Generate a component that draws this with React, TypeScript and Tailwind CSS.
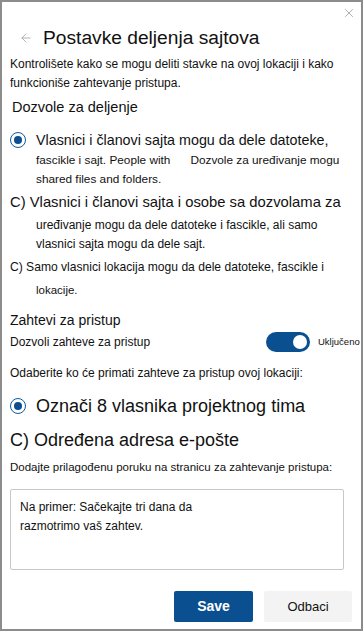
import { X, ArrowLeft } from 'lucide-react';

function Radio({ size = 16 }: { size?: number }) {
  return (
    <span
      className="flex shrink-0 items-center justify-center rounded-full border border-[#0d5a9b] bg-white"
      style={{ width: size, height: size }}
    >
      <span className="rounded-full bg-[#0a4f8f]" style={{ width: size / 2, height: size / 2 }} />
    </span>
  );
}

export default function App() {
  return (
    <div
      className="w-[363px] h-[631px] overflow-hidden bg-white border-2 border-[#8c8c8c] text-[#111] flex flex-col px-[8px]"
      style={{ fontFamily: '"Liberation Sans", Arial, sans-serif' }}
    >
      <div className="flex justify-end pt-[4px] -mr-[3px]">
        <X className="w-[14px] h-[14px] text-[#9a9a9a]" strokeWidth={1.4} />
      </div>

      <div className="mt-[6px] flex items-center h-[24px]">
        <ArrowLeft className="ml-[9px] w-[14px] h-[14px] text-[#a0a0a0]" strokeWidth={1.4} />
        <h1 className="ml-[10px] text-[19.2px] leading-[24px] font-normal">Postavke deljenja sajtova</h1>
      </div>

      <p className="mt-[5px] text-[12px] leading-[19px]">
        Kontrolišete kako se mogu deliti stavke na ovoj lokaciji i kako funkcioniše zahtevanje pristupa.
      </p>

      <h2 className="mt-[4px] ml-[2px] text-[14.5px] leading-[20px]">Dozvole za deljenje</h2>

      <div className="mt-[12px] flex items-center h-[22px] gap-[10px]">
        <Radio size={16} />
        <span className="text-[14.3px] leading-[22px] whitespace-nowrap">Vlasnici i članovi sajta mogu da dele datoteke,</span>
      </div>
      <div className="pl-[26px] text-[11.8px] leading-[19px]">
        <p className="whitespace-nowrap">
          fascikle i sajt. People with<span className="ml-[20px]">Dozvole za uređivanje mogu</span>
        </p>
        <p>shared files and folders.</p>
      </div>

      <p className="mt-[2px] text-[14.8px] leading-[22px] whitespace-nowrap">C) Vlasnici i članovi sajta i osobe sa dozvolama za</p>
      <div className="mt-[3px] pl-[26px] text-[12px] leading-[19px]">
        <p>uređivanje mogu da dele datoteke i fascikle, ali samo</p>
        <p>vlasnici sajta mogu da dele sajt.</p>
      </div>

      <p className="mt-[2px] text-[12.1px] leading-[22px] whitespace-nowrap">C) Samo vlasnici lokacija mogu da dele datoteke, fascikle i</p>
      <p className="mt-[2px] pl-[26px] text-[11.5px] leading-[20px]">lokacije.</p>

      <h2 className="mt-[10px] text-[14px] leading-[20px]">Zahtevi za pristup</h2>

      <div className="flex items-center h-[24px] -mr-[8px]">
        <span className="flex-1 text-[12px]">Dozvoli zahteve za pristup</span>
        <span className="flex items-center justify-end w-[44px] h-[20px] rounded-full bg-[#0a4f8f] pr-[3px]">
          <span className="w-[14px] h-[14px] rounded-full bg-white" />
        </span>
        <span className="ml-[8px] text-[9.5px] w-[43px] whitespace-nowrap">Uključeno</span>
      </div>

      <p className="mt-[9px] text-[12px] leading-[20px] whitespace-nowrap">Odaberite ko će primati zahteve za pristup ovoj lokaciji:</p>

      <div className="mt-[11px] flex items-center h-[24px] gap-[10px]">
        <Radio size={16} />
        <span className="text-[18px] leading-[24px] whitespace-nowrap">Označi 8 vlasnika projektnog tima</span>
      </div>

      <p className="mt-[10px] text-[18px] leading-[24px]">C) Određena adresa e-pošte</p>

      <p className="mt-[6px] text-[11.5px] leading-[18px] whitespace-nowrap">Dodajte prilagođenu poruku na stranicu za zahtevanje pristupa:</p>

      <div className="mt-[13px] w-[334px] h-[81px] rounded-[2px] border border-[#c8c8c8] pl-[9px] pt-[8px] text-[12px] leading-[19px]">
        <p>Na primer: Sačekajte tri dana da</p>
        <p>razmotrimo vaš zahtev.</p>
      </div>

      <div className="mt-[21px] flex justify-end gap-[11px] pr-[1px]">
        <button className="w-[79px] h-[31px] rounded-[2px] bg-[#0a4f8f] text-white text-[14px] font-bold">Save</button>
        <button className="w-[88px] h-[31px] rounded-[2px] bg-[#f3f3f3] text-[#111] text-[13px]">Odbaci</button>
      </div>
    </div>
  );
}
